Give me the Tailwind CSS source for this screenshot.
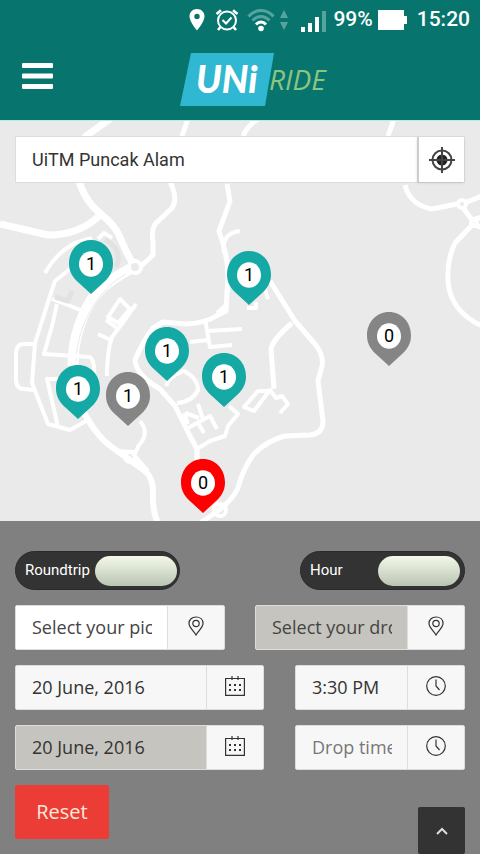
<!DOCTYPE html>
<html lang="en">
<head>
<meta charset="utf-8">
<meta name="viewport" content="width=device-width, initial-scale=1">
<title>UNiRIDE</title>
<script src="https://cdn.jsdelivr.net/npm/@tailwindcss/browser@4"></script>
</head>
<body class="min-h-screen flex flex-col bg-[#808080] font-['Open_Sans',sans-serif] text-[18px] text-[#333]">
<svg class="hidden" aria-hidden="true">
  <symbol id="pin" viewBox="0 0 44 54"><path d="M22 0C9.500 0 0 10 0 23.500C0 32 4 38 10 43L22 54L34 43C40 38 44 32 44 23.500C44 10 34.500 0 22 0Z" fill="currentColor"/><ellipse cx="22" cy="24" rx="12" ry="12.800" fill="#fff"/></symbol>
  <symbol id="place" viewBox="0 0 16 20"><g fill="none" stroke="#333" stroke-width="1.200"><path d="M8 19C6 15 1 11.500 1 7.500C1 3.500 4 1 8 1S15 3.500 15 7.500C15 11.500 10 15 8 19Z"/><circle cx="8" cy="7.500" r="3.200"/></g></symbol>
  <symbol id="calendar" viewBox="0 0 20 20"><g fill="none" stroke="#333"><path stroke-width="1.200" d="M.6 2.500H19.400V19.400H.6ZM7 0V4M13 0V4"/><path d="M4 9H16M4 14H16" stroke-width="2" stroke-dasharray="2 3"/></g></symbol>
  <symbol id="clock" viewBox="0 0 20 20"><g fill="none" stroke="#333" stroke-width="1.200"><circle cx="10" cy="10" r="9.300"/><path d="M10 3.500V10L13.500 14"/></g></symbol>
</svg>

<header class="h-[120px] bg-[#07756d] text-white font-[Roboto,sans-serif]">
  <div class="h-10 flex items-center justify-end pr-[10px] text-[21px] font-medium">
    <svg class="w-4 h-[22px] mr-[10px]" viewBox="0 0 16 22"><path fill="#fff" fill-rule="evenodd" d="M8 0C3.500 0 .5 3.300.5 7.500C.5 12.500 8 21.500 8 21.500S15.500 12.500 15.500 7.500C15.500 3.300 12.500 0 8 0ZM8 4.700A2.700 2.700 0 1 1 8 10.100A2.700 2.700 0 1 1 8 4.700Z"/></svg>
    <svg class="w-6 h-6 mr-2" viewBox="0 0 24 24" fill="none" stroke="#fff" stroke-width="2"><circle cx="12" cy="12.500" r="9"/><path d="M7.500 12L11 15.500L16.500 9.500"/><path stroke-width="2.600" d="M1.500 6L6 2.300M22.500 6L18 2.300M5.500 19L3 22M18.500 19L21 22"/></svg>
    <svg class="w-7 h-6 mr-1" viewBox="0 0 28 24" fill="none" stroke-width="3"><path stroke="#57a49e" d="M1.500 8.500C8.500.5 19.500.5 26.500 8.500M5.500 12.500C10.500 7 17.500 7 22.500 12.500"/><path stroke="#fff" d="M9 16.500C12 13.300 16 13.300 19 16.500"/><circle cx="14" cy="20.500" r="2.800" fill="#fff"/></svg>
    <svg class="w-[10px] h-5 mr-3" viewBox="0 0 10 20" fill="#57a49e"><path d="M5 0L9 8H1ZM5 20L9 12H1Z"/></svg>
    <svg class="w-[26px] h-6 mr-[6px]" viewBox="0 0 26 24"><path fill="#fff" d="M0 19H4V24H0ZM7 15H11V24H7ZM14 9H18V24H14Z"/><path fill="#57a49e" d="M21 3H25V24H21Z"/></svg>
    <span>99%</span>
    <svg class="w-[30px] h-5 ml-[5px] mr-[9px]" viewBox="0 0 30 20"><path fill="#fff" d="M0 0H26V6H29V14H26V20H0Z"/></svg>
    <span>15:20</span>
  </div>
  <div class="relative h-20 flex items-center pl-5">
    <button aria-label="Menu" class="w-[35px] h-10 mb-2 flex items-center justify-center"><svg class="w-[31px] h-[26px]" viewBox="0 0 31 26" fill="#fff"><rect width="31" height="5" rx="1"/><rect y="10.500" width="31" height="5" rx="1"/><rect y="21" width="31" height="5" rx="1"/></svg></button>
    <a href="#" aria-label="UNi RIDE" class="absolute top-[13px] left-1/2 -ml-15">
      <svg class="w-[154px] h-[54px]" viewBox="0 0 154 54"><path d="M11 0H94L85 53H0Z" fill="#30b8d2"/><text x="16" y="40" fill="#fff" font-family="Lato, sans-serif" font-size="37" font-weight="900" font-style="italic">UNi</text><text x="89" y="37" fill="#8cc481" font-family="'Liberation Sans Narrow', 'Open Sans', sans-serif" font-size="28" font-style="italic">RIDE</text></svg>
    </a>
  </div>
</header>

<section aria-label="Map" class="relative h-[401px] overflow-hidden bg-[#eaeaea] border-t border-[#b5efec] font-[Roboto,sans-serif]">
  <svg class="absolute inset-0 w-full h-full" viewBox="0 0 480 400" preserveAspectRatio="xMidYMin slice" fill="none" stroke="#fff" stroke-width="4" stroke-linejoin="round" aria-hidden="true">
    <path stroke-width="7" d="M110 -2L86 15L76 40L80 63C86 80 94 87 102 94Q113 103 118 112L126 130L132 141M0 103L48 114Q80 114 100 94"/>
    <path stroke-width="5" d="M188 -2L182 15L171 63Q178 78 172 87L155 103Q151 110 153 120V134L140 146M258 -2Q248 4 243 15M394 -2L388 15"/>
    <circle cx="135" cy="146" r="6"/>
    <path stroke-width="11" d="M130 148C108 160 95 170 87 187C78 204 73 222 73 245"/>
    <path stroke="#eaeaea" stroke-width="1" d="M126 153C98 168 77 205 76 240"/>
    <path d="M45 152Q56 132 75 122L92 117M98 118L104 112L112 117M70 148L55 160L50 175L42 200L35 222L32 262L48 303L70 309L88 299M35 223H22Q16 225 16 232V260Q17 268 24 268L33 269M57 183L52 205L44 233L90 236Q95 240 94 255M60 258H47L58 306M52 178L68 184L85 191"/>
    <path stroke="#e1e2e1" stroke-width="5" d="M105 118Q124 130 116 146M55 176L68 180L72 170"/>
    <path d="M130 188L120 178L108 196L118 202ZM136 183L124 200L112 216Q107 230 107 255M98 213L113 220M106 199L118 208"/>
    <path stroke-width="6" d="M75 275C88 300 98 318 116 329L145 350Q153 357 153 370Q152 390 158 402"/>
    <path d="M140 300Q150 312 139 324L134 334L148 350M115 330L134 331"/><circle cx="130" cy="336" r="5"/>
    <path stroke-width="5" d="M227 63L230 80L219 110Q228 135 228 155L226 190L218 194Q204 203 185 203L163 201L153 207Q142 222 135 239Q136 254 160 268L175 285L190 315L197 328V345"/>
    <path d="M224 132Q221 112 240 110M217 192L226 184M166 265Q168 256 184 250Q198 257 198 269Q192 281 177 282M188 307L210 295L217 308M184 292L188 303M185 292L199 297M198 283L203 298M198 302L204 312M205 198L210 226L232 224M207 210L242 208M190 221L208 219M229 285L238 293L228 305L225 315L210 320L197 328M247 187H256V181M264 165L268 178"/>
    <path stroke-width="5" d="M270 160L295 200L315 223Q324 234 322 245L318 260L323 300Q323 313 310 314L285 315Q266 320 253 334Q242 350 238 367Q232 380 215 392L200 402M292 202Q273 218 271 228L274 268"/>
    <path d="M272 270L258 270L244 286L254 290L270 269L276 277L282 275L288 283L280 292"/>
    <circle cx="220" cy="389" r="6"/>
    <path stroke-width="5" d="M405 64Q410 84 432 88L457 83M467 81L482 75M464 88L472 99L482 96M474 102L455 122Q447 138 448 160Q450 190 482 205M474 103L482 107"/>
    <circle cx="462" cy="83" r="4"/><circle cx="474" cy="102" r="3"/>
  </svg>

  <form class="absolute inset-x-[15px] top-[15px] h-[47px] flex bg-white border border-[#ddd]">
    <input aria-label="Search location" value="UiTM Puncak Alam" class="min-w-0 flex-1 px-4 outline-none">
    <button type="button" aria-label="Use my location" class="w-[47px] flex items-center justify-center border-l-2 border-[#ccc] shadow-sm"><svg class="w-[26px] h-[26px]" viewBox="0 0 26 26" fill="none" stroke="#444" stroke-width="2"><circle cx="13" cy="13" r="9.500"/><circle cx="13" cy="13" r="5.500" fill="#222" stroke="none"/><path d="M13 0V26M0 13H26"/></svg></button>
  </form>

  <button class="absolute left-[69px] top-[119px] w-11 h-[54px] text-[#14a9a4]"><svg class="w-full h-full"><use href="#pin"/></svg><span class="absolute inset-x-0 top-3 leading-6 text-black">1</span></button>
  <button class="absolute left-[227px] top-[130px] w-11 h-[54px] text-[#14a9a4]"><svg class="w-full h-full"><use href="#pin"/></svg><span class="absolute inset-x-0 top-3 leading-6 text-black">1</span></button>
  <button class="absolute left-[367px] top-[191px] w-11 h-[54px] text-[#858585]"><svg class="w-full h-full"><use href="#pin"/></svg><span class="absolute inset-x-0 top-3 leading-6 text-black">0</span></button>
  <button class="absolute left-[145px] top-[206px] w-11 h-[54px] text-[#14a9a4]"><svg class="w-full h-full"><use href="#pin"/></svg><span class="absolute inset-x-0 top-3 leading-6 text-black">1</span></button>
  <button class="absolute left-[202px] top-[232px] w-11 h-[54px] text-[#14a9a4]"><svg class="w-full h-full"><use href="#pin"/></svg><span class="absolute inset-x-0 top-3 leading-6 text-black">1</span></button>
  <button class="absolute left-[56px] top-[244px] w-11 h-[54px] text-[#14a9a4]"><svg class="w-full h-full"><use href="#pin"/></svg><span class="absolute inset-x-0 top-3 leading-6 text-black">1</span></button>
  <button class="absolute left-[106px] top-[251px] w-11 h-[54px] text-[#858585]"><svg class="w-full h-full"><use href="#pin"/></svg><span class="absolute inset-x-0 top-3 leading-6 text-black">1</span></button>
  <button class="absolute left-[181px] top-[338px] w-11 h-[54px] text-[#ff0000]"><svg class="w-full h-full"><use href="#pin"/></svg><span class="absolute inset-x-0 top-3 leading-6 text-black">0</span></button>
</section>

<form class="flex-1 flex flex-col gap-[15px] px-[15px] pt-[30px]">
  <div class="flex justify-between">
    <label class="w-[165px] h-[39px] pl-[9px] pr-[2px] flex items-center justify-between rounded-full bg-[#333] border border-[#2a2a2a] text-white text-[15px] font-[Roboto,sans-serif]">Roundtrip<input type="checkbox" checked class="appearance-none w-[82px] h-[30px] rounded-full bg-linear-to-b from-[#f4f9ea] to-[#bac5b3]"></label>
    <label class="w-[165px] h-[39px] pl-[9px] pr-1 flex items-center justify-between rounded-full bg-[#333] border border-[#2a2a2a] text-white text-[15px] font-[Roboto,sans-serif]">Hour<input type="checkbox" checked class="appearance-none w-[82px] h-[30px] rounded-full bg-linear-to-b from-[#f4f9ea] to-[#bac5b3]"></label>
  </div>
  <div class="flex gap-[30px]">
    <label class="flex-1 min-w-0 h-[45px] flex rounded-xs border border-[#ddd] bg-[#f7f7f7] overflow-hidden"><input aria-label="Pickup location" placeholder="Select your pickup" class="min-w-0 flex-1 pl-4 pr-[15px] bg-white placeholder:text-[#444] outline-none"><span class="w-[57px] flex items-center justify-center border-l border-[#ddd]"><svg class="w-4 h-5 mb-[3px]"><use href="#place"/></svg></span></label>
    <label class="flex-1 min-w-0 h-[45px] flex rounded-xs border border-[#ddd] bg-[#f7f7f7] overflow-hidden"><input aria-label="Drop location" placeholder="Select your drop" class="min-w-0 flex-1 pl-4 pr-[15px] bg-[#c5c4be] placeholder:text-[#444] outline-none"><span class="w-[57px] flex items-center justify-center border-l border-[#ddd]"><svg class="w-4 h-5 mb-[3px]"><use href="#place"/></svg></span></label>
  </div>
  <div class="flex gap-[31px]">
    <label class="flex-1 min-w-0 h-[45px] flex rounded-xs border border-[#ddd] bg-[#f7f7f7] overflow-hidden"><input aria-label="Pickup date" value="20 June, 2016" class="min-w-0 flex-1 pl-4 pr-[15px] outline-none"><span class="w-[57px] flex items-center justify-center border-l border-[#ddd]"><svg class="w-5 h-5 mb-[3px]"><use href="#calendar"/></svg></span></label>
    <label class="w-[170px] h-[45px] flex rounded-xs border border-[#ddd] bg-[#f7f7f7] overflow-hidden"><input aria-label="Pickup time" value="3:30 PM" class="min-w-0 flex-1 pl-4 pr-[15px] outline-none"><span class="w-[57px] flex items-center justify-center border-l border-[#ddd]"><svg class="w-5 h-5 mb-[3px]"><use href="#clock"/></svg></span></label>
  </div>
  <div class="flex gap-[31px]">
    <label class="flex-1 min-w-0 h-[45px] flex rounded-xs border border-[#ddd] bg-[#f7f7f7] overflow-hidden"><input aria-label="Drop date" value="20 June, 2016" class="min-w-0 flex-1 pl-4 pr-[15px] bg-[#c5c4be] outline-none"><span class="w-[57px] flex items-center justify-center border-l border-[#ddd]"><svg class="w-5 h-5 mb-[3px]"><use href="#calendar"/></svg></span></label>
    <label class="w-[170px] h-[45px] flex rounded-xs border border-[#ddd] bg-[#f7f7f7] overflow-hidden"><input aria-label="Drop time" placeholder="Drop time" class="min-w-0 flex-1 pl-4 pr-[15px] placeholder:text-[#777] outline-none"><span class="w-[57px] flex items-center justify-center border-l border-[#ddd]"><svg class="w-5 h-5 mb-[3px]"><use href="#clock"/></svg></span></label>
  </div>
  <div class="flex-1 flex justify-between">
    <button type="reset" class="w-[94px] h-[54px] rounded-xs bg-[#eb3d35] text-[#fbe9dc] text-[20px]">Reset</button>
    <a href="#" aria-label="Back to top" class="self-end w-[47px] h-[47px] flex items-center justify-center rounded-xs bg-[#333]"><svg class="w-3 h-2" viewBox="0 0 12 8" fill="none" stroke="#ddd" stroke-width="2"><path d="M1 7L6 2L11 7"/></svg></a>
  </div>
</form>
</body>
</html>
